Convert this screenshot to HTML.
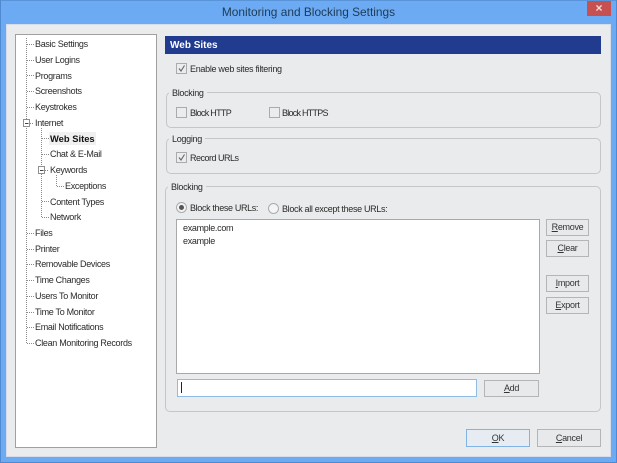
<!DOCTYPE html>
<html><head><meta charset="utf-8"><style>
html,body{margin:0;padding:0;width:617px;height:463px;overflow:hidden;background:#6cabf3}
*{box-sizing:border-box}
body{font-family:"Liberation Sans",sans-serif;font-size:9px;letter-spacing:-.3px;color:#2a2a2a;position:relative}
#w{left:0;top:0;width:617px;height:463px;filter:blur(.3px)}
div,span.t{position:absolute}
.t{white-space:nowrap;line-height:12px;height:12px}
.g{border:1px solid #c4c6c8;border-radius:5px}
.l{background:#e9ebed;padding:0 3px;line-height:12px;height:12px;white-space:nowrap}
.b{background:#e8e9ea;border:1px solid #b4b5b6;text-align:center;line-height:15px;color:#333}
.c{width:11px;height:11px;border:1px solid #a9abad;background:#ececec}
.c svg{position:absolute;left:0;top:0}
.r{width:11px;height:11px;border:1px solid #a9abad;border-radius:50%;background:#f4f4f4}
u{text-decoration:underline}
</style></head><body><div id="w">
<div style="left:0;top:0;width:617px;height:1px;background:#5a94d8"></div>
<div style="left:0;top:0;width:1px;height:463px;background:#4f8ad0"></div>
<div style="left:616px;top:0;width:1px;height:463px;background:#4f8ad0"></div>
<div style="left:0;top:462px;width:617px;height:1px;background:#4f8ad0"></div>
<div style="left:587px;top:1px;width:24px;height:15px;background:#c75050;color:#f4dcdc;text-align:center;font-size:12px;letter-spacing:0;line-height:15px;font-weight:bold">×</div>
<div class="t" style="left:0;width:617px;top:4px;height:16px;line-height:16px;text-align:center;font-size:11.9px;letter-spacing:0;color:#1d3a55">Monitoring and Blocking Settings</div>

<div style="left:6px;top:24px;width:605px;height:433px;background:#e9ebed;border:1px solid #d6dde8"></div>
<div style="left:15px;top:34px;width:142px;height:414px;background:#fff;border:1px solid #a0a0a0"></div>

<svg style="position:absolute;left:0;top:0" width="617" height="463">
<g stroke="#8a8a8a" stroke-width="1" stroke-dasharray="1 1" fill="none" shape-rendering="crispEdges">
<path d="M26.5 38V343.5"/>
<path d="M41.5 128V217.5"/>
<path d="M56.5 175V186.5"/>
<path d="M27 44.5H34M27 60.5H34M27 75.5H34M27 91.5H34M27 107.5H34M30 123.5H34M27 233.5H34M27 249.5H34M27 264.5H34M27 280.5H34M27 296.5H34M27 312.5H34M27 327.5H34M27 343.5H34"/>
<path d="M42 138.5H49M42 154.5H49M45 170.5H49M42 201.5H49M42 217.5H49M57 186.5H64"/>
</g>
<g fill="#fff" stroke="#8f8f8f" shape-rendering="crispEdges">
<rect x="23.5" y="119.5" width="6" height="7"/>
<rect x="38.5" y="166.5" width="6" height="7"/>
</g>
<path d="M25 123.5H28.5M40 170.5H43.5" stroke="#444" shape-rendering="crispEdges"/>
</svg>

<span class="t" style="left:35px;top:38px">Basic Settings</span>
<span class="t" style="left:35px;top:54px">User Logins</span>
<span class="t" style="left:35px;top:70px">Programs</span>
<span class="t" style="left:35px;top:85px">Screenshots</span>
<span class="t" style="left:35px;top:101px">Keystrokes</span>
<span class="t" style="left:35px;top:117px">Internet</span>
<div style="left:49px;top:132px;width:47px;height:13px;background:#f0f0f0"></div>
<span class="t" style="left:50px;top:133px;font-weight:bold;font-size:9.4px;letter-spacing:0;color:#111">Web Sites</span>
<span class="t" style="left:50px;top:148px">Chat &amp; E-Mail</span>
<span class="t" style="left:50px;top:164px">Keywords</span>
<span class="t" style="left:65px;top:180px">Exceptions</span>
<span class="t" style="left:50px;top:196px">Content Types</span>
<span class="t" style="left:50px;top:211px">Network</span>
<span class="t" style="left:35px;top:227px">Files</span>
<span class="t" style="left:35px;top:243px">Printer</span>
<span class="t" style="left:35px;top:258px">Removable Devices</span>
<span class="t" style="left:35px;top:274px">Time Changes</span>
<span class="t" style="left:35px;top:290px">Users To Monitor</span>
<span class="t" style="left:35px;top:306px">Time To Monitor</span>
<span class="t" style="left:35px;top:321px">Email Notifications</span>
<span class="t" style="left:35px;top:337px">Clean Monitoring Records</span>

<div style="left:165px;top:36px;width:436px;height:18px;background:#213b8e"></div>
<span class="t" style="left:170px;top:40px;color:#fff;font-weight:bold;font-size:10px;letter-spacing:0">Web Sites</span>

<div class="c" style="left:176px;top:63px"><svg width="9" height="9"><path d="M2 4.5L4 7L7.5 1.5" stroke="#666" stroke-width="1.1" fill="none"/></svg></div>
<span class="t" style="left:190px;top:63px">Enable web sites filtering</span>

<div class="g" style="left:166px;top:92px;width:435px;height:36px"></div>
<div class="l" style="left:169px;top:87px">Blocking</div>
<div class="c" style="left:176px;top:107px"></div>
<span class="t" style="left:190px;top:107px;letter-spacing:-.7px">Block HTTP</span>
<div class="c" style="left:269px;top:107px"></div>
<span class="t" style="left:282px;top:107px;letter-spacing:-.75px">Block HTTPS</span>

<div class="g" style="left:166px;top:138px;width:435px;height:36px"></div>
<div class="l" style="left:169px;top:133px">Logging</div>
<div class="c" style="left:176px;top:152px"><svg width="9" height="9"><path d="M2 4.5L4 7L7.5 1.5" stroke="#666" stroke-width="1.1" fill="none"/></svg></div>
<span class="t" style="left:190px;top:152px;letter-spacing:-.5px">Record URLs</span>

<div class="g" style="left:165px;top:186px;width:436px;height:226px"></div>
<div class="l" style="left:168px;top:181px">Blocking</div>
<div class="r" style="left:176px;top:202px"></div>
<div style="left:179px;top:205px;width:5px;height:5px;border-radius:50%;background:#555"></div>
<span class="t" style="left:190px;top:202px;letter-spacing:-.35px">Block these URLs:</span>
<div class="r" style="left:268px;top:203px"></div>
<span class="t" style="left:282px;top:203px;letter-spacing:-.33px">Block all except these URLs:</span>

<div style="left:176px;top:219px;width:364px;height:155px;background:#fff;border:1px solid #a9a9a9"></div>
<span class="t" style="left:183px;top:222px">example.com</span>
<span class="t" style="left:183px;top:235px">example</span>

<div style="left:177px;top:379px;width:300px;height:18px;background:#fff;border:1px solid #8fbce6"></div>
<div style="left:181px;top:382px;width:1px;height:11px;background:#222"></div>

<div class="b" style="left:484px;top:380px;width:55px;height:17px"><u>A</u>dd</div>
<div class="b" style="left:546px;top:219px;width:43px;height:17px"><u>R</u>emove</div>
<div class="b" style="left:546px;top:240px;width:43px;height:17px"><u>C</u>lear</div>
<div class="b" style="left:546px;top:275px;width:43px;height:17px"><u>I</u>mport</div>
<div class="b" style="left:546px;top:297px;width:43px;height:17px"><u>E</u>xport</div>
<div class="b" style="left:466px;top:429px;width:64px;height:18px;border-color:#7fb4e4;background:#e6ecf2;line-height:16px"><u>O</u>K</div>
<div class="b" style="left:537px;top:429px;width:64px;height:18px;line-height:16px"><u>C</u>ancel</div>
</div></body></html>
